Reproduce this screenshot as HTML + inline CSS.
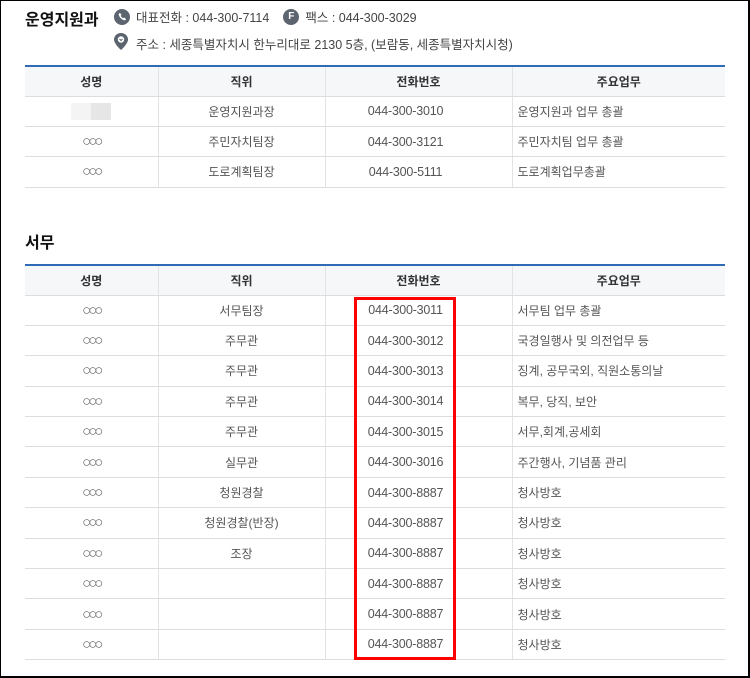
<!DOCTYPE html><html><head><meta charset="utf-8"><style>
*{margin:0;padding:0;box-sizing:border-box}
body{width:750px;height:678px;background:#fff;font-family:"Liberation Sans","Noto Sans CJK KR",sans-serif;position:relative;overflow:hidden}
.frame{position:absolute;left:0;top:0;width:750px;height:678px;border:1px solid #000;border-right-width:2px;border-bottom-width:2px}
h2{position:absolute;left:25px;font-size:16px;font-weight:bold;color:#111}
.info{position:absolute;font-size:12.5px;color:#444;display:flex;align-items:center}
.ic{width:16px;height:16px;border-radius:50%;background:#5c6470;color:#fff;font-size:10px;font-weight:bold;display:inline-flex;align-items:center;justify-content:center;margin-right:6px}
table{position:absolute;left:25px;width:700px;border-collapse:collapse;table-layout:fixed;font-size:12px;color:#555}
table{border-top:2px solid #2f6cb5}
th{background:#f6f7f9;color:#333;font-weight:bold;height:30px;border-bottom:1px solid #ddd;border-left:1px solid #e3e3e3}
td{height:30.4px;border-bottom:1px solid #ddd;border-left:1px solid #e3e3e3;text-align:center}
th:first-child,td:first-child{border-left:none}
td:nth-child(3){padding-right:26px;font-size:12.5px;letter-spacing:-0.2px}
td:first-child{font-size:15px;letter-spacing:-3px;color:#666}
td.l{text-align:left;padding-left:5px}
.red{position:absolute;left:354px;top:297px;width:102px;height:363px;border:3px solid #f00}
.blur{display:inline-block;width:40px;height:17px;background:linear-gradient(90deg,#f4f4f4 50%,#e6e6e6 50%);vertical-align:middle}
</style></head><body>
<div class="frame"></div>
<h2 style="top:6px">운영지원과</h2>
<div class="info" style="left:114px;top:7px"><span class="ic"><svg width="9" height="9" viewBox="0 0 10 10"><path d="M2 1l2 2-1 1.2c.6 1.2 1.6 2.2 2.8 2.8L7 6l2 2-1.3 1.3C4.5 9 1 5.5.7 2.3z" fill="#fff"/></svg></span>대표전화 : 044-300-7114<span class="ic" style="margin-left:14px">F</span>팩스 : 044-300-3029</div>
<div class="info" style="left:114px;top:33px"><span style="display:inline-block;width:16px;margin-right:6px"><svg width="14" height="17" viewBox="0 0 14 17"><path d="M7 0C3 0 0 3 0 6.5 0 11 7 17 7 17s7-6 7-10.5C14 3 11 0 7 0z" fill="#5c6470"/><circle cx="7" cy="6.5" r="3.2" fill="#fff"/><path d="M5.5 6l1.5 1.5L8.5 6" stroke="#5c6470" fill="none"/></svg></span>주소 : 세종특별자치시 한누리대로 2130 5층, (보람동, 세종특별자치시청)</div>
<table style="top:65px">
<colgroup><col style="width:133px"><col style="width:167px"><col style="width:187px"><col></colgroup>
<tr><th>성명</th><th>직위</th><th>전화번호</th><th>주요업무</th></tr>
<tr><td><span class="blur"></span></td><td>운영지원과장</td><td>044-300-3010</td><td class="l">운영지원과 업무 총괄</td></tr>
<tr><td>○○○</td><td>주민자치팀장</td><td>044-300-3121</td><td class="l">주민자치팀 업무 총괄</td></tr>
<tr><td>○○○</td><td>도로계획팀장</td><td>044-300-5111</td><td class="l">도로계획업무총괄</td></tr>
</table>
<h2 style="top:229px">서무</h2>
<table style="top:264px">
<colgroup><col style="width:133px"><col style="width:167px"><col style="width:187px"><col></colgroup>
<tr><th>성명</th><th>직위</th><th>전화번호</th><th>주요업무</th></tr>
<tr><td>○○○</td><td>서무팀장</td><td>044-300-3011</td><td class="l">서무팀 업무 총괄</td></tr>
<tr><td>○○○</td><td>주무관</td><td>044-300-3012</td><td class="l">국경일행사 및 의전업무 등</td></tr>
<tr><td>○○○</td><td>주무관</td><td>044-300-3013</td><td class="l">징계, 공무국외, 직원소통의날</td></tr>
<tr><td>○○○</td><td>주무관</td><td>044-300-3014</td><td class="l">복무, 당직, 보안</td></tr>
<tr><td>○○○</td><td>주무관</td><td>044-300-3015</td><td class="l">서무,회계,공세회</td></tr>
<tr><td>○○○</td><td>실무관</td><td>044-300-3016</td><td class="l">주간행사, 기념품 관리</td></tr>
<tr><td>○○○</td><td>청원경찰</td><td>044-300-8887</td><td class="l">청사방호</td></tr>
<tr><td>○○○</td><td>청원경찰(반장)</td><td>044-300-8887</td><td class="l">청사방호</td></tr>
<tr><td>○○○</td><td>조장</td><td>044-300-8887</td><td class="l">청사방호</td></tr>
<tr><td>○○○</td><td></td><td>044-300-8887</td><td class="l">청사방호</td></tr>
<tr><td>○○○</td><td></td><td>044-300-8887</td><td class="l">청사방호</td></tr>
<tr><td>○○○</td><td></td><td>044-300-8887</td><td class="l">청사방호</td></tr>
</table>
<div class="red"></div>
</body></html>
